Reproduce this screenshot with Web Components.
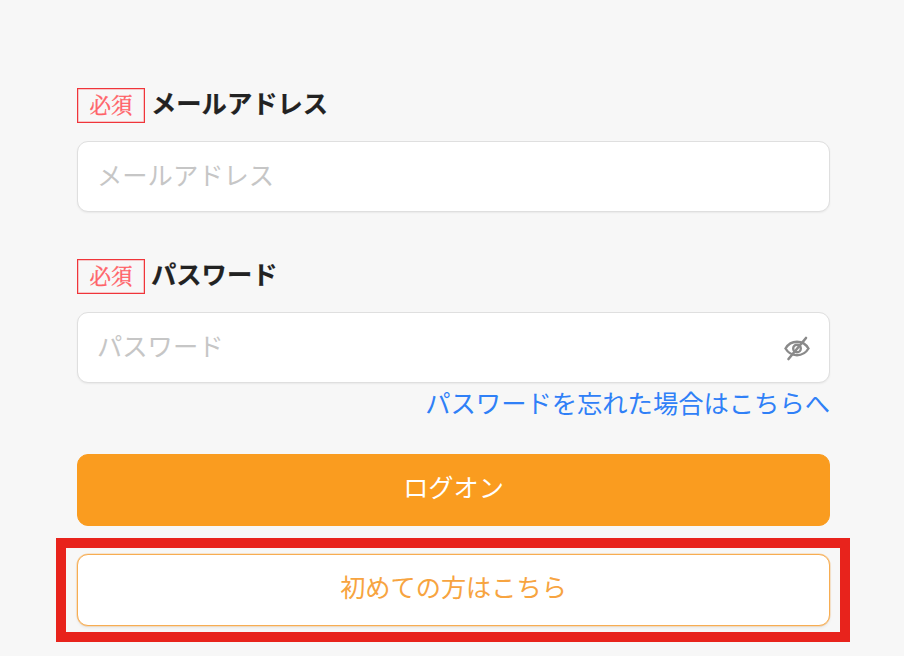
<!DOCTYPE html>
<html lang="ja">

<head>
  <meta charset="UTF-8">
  <title>ログオン</title>
  <style>
    html, body { margin: 0; height: 100%; background: #f7f7f7; }
    body { font-family: "Noto Sans CJK JP", "Liberation Sans", sans-serif; overflow: hidden; }
  </style>
</head>

<body>
  <login-form>
    <form-field label="メールアドレス" placeholder="メールアドレス"></form-field>
    <form-field class="pw" label="パスワード" placeholder="パスワード" eye></form-field>
    <a slot="forgot" href="#">パスワードを忘れた場合はこちらへ</a>
    <login-button slot="primary" kind="primary">ログオン</login-button>
    <login-button slot="secondary">初めての方はこちら</login-button>
  </login-form>

  <script>
    // 必須バッジ
    class RequiredBadge extends HTMLElement {
      constructor() {
        super();
        this.attachShadow({ mode: 'open' }).innerHTML = `
<style>
  :host {
    display: flex; align-items: center; justify-content: center;
    box-sizing: border-box; width: 68px; height: 35px; padding-bottom: 3px;
    border: 1px solid #f0353a; box-shadow: inset 0 0 0 .5px rgba(240, 53, 58, .5); color: #ff6166;
    -webkit-text-stroke: .35px #ff6166;
    font: 400 21.5px/1 "Noto Serif CJK JP", "Liberation Serif", "Noto Sans CJK JP", serif;
  }
</style><slot></slot>`;
      }
    }
    customElements.define('required-badge', RequiredBadge);

    // ラベル + 入力欄
    class FormField extends HTMLElement {
      constructor() {
        super();
        const label = this.getAttribute('label');
        const placeholder = this.getAttribute('placeholder');
        const eye = this.hasAttribute('eye') ? `
  <svg viewBox="0 0 26 26" width="26" height="26" fill="none" stroke="#8a8a8a" stroke-width="2.4">
    <path d="M1.500 13.500C4.500 8.500 8.500 6.800 13 6.800s8.500 1.700 11.500 6.700c-3 5-7 6.700-11.500 6.700s-8.500-1.700-11.500-6.700z"/>
    <circle cx="13" cy="13.500" r="3.800"/>
    <path d="M22 3 4.500 24" stroke-linecap="round" stroke-width="2.600"/>
  </svg>` : '';
        this.attachShadow({ mode: 'open' }).innerHTML = `
<style>
  :host { display: block; }
  .head { display: flex; align-items: center; gap: 6px; height: 35px; margin-bottom: 18px; }
  label { font-size: 25.3px; font-weight: 700; color: #222; line-height: 35px; padding-bottom: 6px; margin-top: -1px; -webkit-text-stroke: .2px #222; }
  .box {
    display: flex; align-items: center; box-sizing: border-box; height: 71px;
    padding: 0 19px; background: #fff;
    border: 1px solid #dfdfdf; border-radius: 11px;
    box-shadow: 0 1px 2px rgba(0, 0, 0, .06);
  }
  input {
    flex: 1; min-width: 0; border: 0; outline: 0; padding: 0 0 6px; background: none;
    font: 25.3px "Noto Sans CJK JP", sans-serif; color: #222;
  }
  input::placeholder { color: #c6c6c6; opacity: 1; }
  svg { flex: none; }
</style>
<div class="head"><required-badge>必須</required-badge><label>${label}</label></div>
<div class="box"><input placeholder="${placeholder}">${eye}</div>`;
      }
    }
    customElements.define('form-field', FormField);

    class LoginButton extends HTMLElement {
      constructor() {
        super();
        this.attachShadow({ mode: 'open' }).innerHTML = `
<style>
  :host {
    display: flex; align-items: center; justify-content: center;
    box-sizing: border-box; height: 72px; border-radius: 11px; padding-bottom: 8px;
    font-size: 25.200px; cursor: pointer;
    background: #fff; color: #f7a440; border: 1px solid #f7ad52;
    box-shadow: 0 0 0 .5px rgba(247, 173, 82, .5), 0 2px 3px rgba(0, 0, 0, .06);
  }
  :host([kind="primary"]) { background: #fa9c1f; color: #fff; border-color: #fa9c1f; box-shadow: none; }
</style><slot></slot>`;
      }
    }
    customElements.define('login-button', LoginButton);

    // ページ全体
    class LoginForm extends HTMLElement {
      constructor() {
        super();
        this.attachShadow({ mode: 'open' }).innerHTML = `
<style>
  :host { display: block; padding: 88px 54px 0 56px; }
  .fields { display: flex; flex-direction: column; gap: 47px; padding: 0 20px 0 21px; }
  .forgot { display: flex; justify-content: flex-end; height: 41px; padding: 0 20px 0 21px; line-height: 39px; margin-bottom: 30px; }
  ::slotted(a) { color: #2f80f7; font-size: 25.300px; text-decoration: none; }
  .primary { padding: 0 20px 0 21px; margin-bottom: 12px; }
  .callout { box-sizing: border-box; height: 104px; border: 10px solid #e8231c; padding: 6px 10px 6px 11px; }
</style>
<div class="fields"><slot></slot></div>
<div class="forgot"><slot name="forgot"></slot></div>
<div class="primary"><slot name="primary"></slot></div>
<div class="callout"><slot name="secondary"></slot></div>`;
      }
    }
    customElements.define('login-form', LoginForm);
  </script>
</body>

</html>
